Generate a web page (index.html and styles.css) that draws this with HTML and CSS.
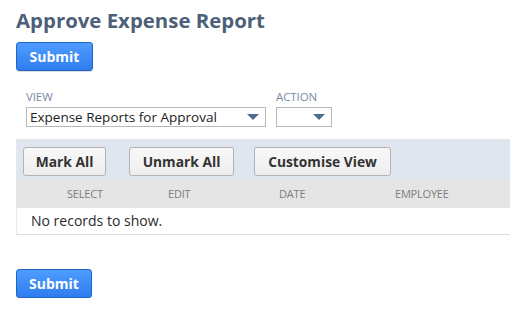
FILE: index.html
```html
<!DOCTYPE html>
<html>
<head>
<meta charset="utf-8">
<link rel="stylesheet" href="styles.css">
</head>
<body>
<div class="page">
  <h1 class="title">Approve Expense Report</h1>
  <button class="btn-primary">Submit</button>

  <div class="filters">
    <div class="field">
      <div class="label">VIEW</div>
      <div class="select select-view">
        <span class="select-text">Expense Reports for Approval</span>
        <span class="arrow"></span>
      </div>
    </div>
    <div class="field">
      <div class="label">ACTION</div>
      <div class="select select-action">
        <span class="select-text"></span>
        <span class="arrow"></span>
      </div>
    </div>
  </div>

  <div class="panel">
    <div class="toolbar">
      <button class="btn">Mark All</button>
      <button class="btn">Unmark All</button>
      <button class="btn">Customise View</button>
    </div>
    <div class="thead">
      <span class="th th-select">SELECT</span>
      <span class="th th-edit">EDIT</span>
      <span class="th th-date">DATE</span>
      <span class="th th-emp">EMPLOYEE</span>
    </div>
    <div class="empty">No records to show.</div>
  </div>

  <button class="btn-primary bottom">Submit</button>
</div>
</body>
</html>
```

FILE: styles.css
```css
* { box-sizing: border-box; }
html, body { margin: 0; padding: 0; background: #ffffff; }
body { font-family: "Open Sans", "Liberation Sans", sans-serif; color: #333333; overflow: hidden; }

.page { padding-left: 16px; display: flex; flex-direction: column; align-items: flex-start; }

.title {
  margin: 7px 0 0 0;
  font-size: 20.4px;
  line-height: 27px;
  font-weight: 700;
  color: #4d5f79;
}

.btn-primary {
  margin-top: 8px;
  width: 77px;
  height: 29px;
  border: 1px solid #1f66c9;
  border-radius: 3px;
  background: linear-gradient(#4f9cff, #2f7cf0);
  color: #ffffff;
  font-family: "Open Sans", "Liberation Sans", sans-serif;
  font-weight: 700;
  font-size: 14px;
  padding: 0;
  box-shadow: 0 1px 1px rgba(0,0,0,0.15);
}
.btn-primary.bottom { margin-top: 34px; width: 76px; }

.filters { margin-top: 19px; margin-left: 10px; display: flex; gap: 10px; }
.field { display: flex; flex-direction: column; }
.label {
  font-size: 11.5px;
  line-height: 14px;
  color: #7a8aa3;
  margin-bottom: 3px;
  letter-spacing: -0.1px;
}
.select {
  height: 20px;
  border: 1px solid #b8b8b8;
  background: #fff;
  display: flex;
  align-items: center;
  justify-content: space-between;
  padding: 0 6px 0 3px;
}
.select-view { width: 240px; }
.select-action { width: 56px; }
.select-text { font-size: 13.5px; line-height: 18px; color: #222; }
.arrow {
  width: 0; height: 0;
  border-left: 6px solid transparent;
  border-right: 6px solid transparent;
  border-top: 6px solid #4f6b8f;
}

.panel {
  margin-top: 12px;
  width: 494px;
  border-top: 1px solid #e6e6e6;
  border-left: 1px solid #e8e8e8;
  border-bottom: 1px solid #dedede;
}
.toolbar {
  background: #e0e6ef;
  padding: 7px 0 3px 6px;
  display: flex;
  gap: 22px;
}
.btn {
  height: 29px;
  border: 1px solid #b4b4b4;
  border-radius: 3px;
  background: linear-gradient(#f8f8f8, #eeeeee);
  font-family: "Open Sans", "Liberation Sans", sans-serif;
  font-weight: 700;
  font-size: 13.8px;
  color: #333;
  padding: 0 6px;
}
.toolbar .btn:nth-child(1) { width: 83px; }
.toolbar .btn:nth-child(2) { width: 105px; margin-left: 1px; }
.toolbar .btn:nth-child(3) { width: 137px; margin-left: -2px; }

.thead {
  background: #e5e5e5;
  height: 29px;
  display: grid;
  grid-template-columns: 101px 111px 116px auto;
  align-items: center;
  padding-left: 50px;
}
.th { font-size: 11px; color: #7d7d7d; letter-spacing: -0.2px; }

.empty {
  height: 26px;
  line-height: 26px;
  padding-left: 14px;
  font-size: 14px;
  color: #2b2b2b;
  background: #fff;
}
```
